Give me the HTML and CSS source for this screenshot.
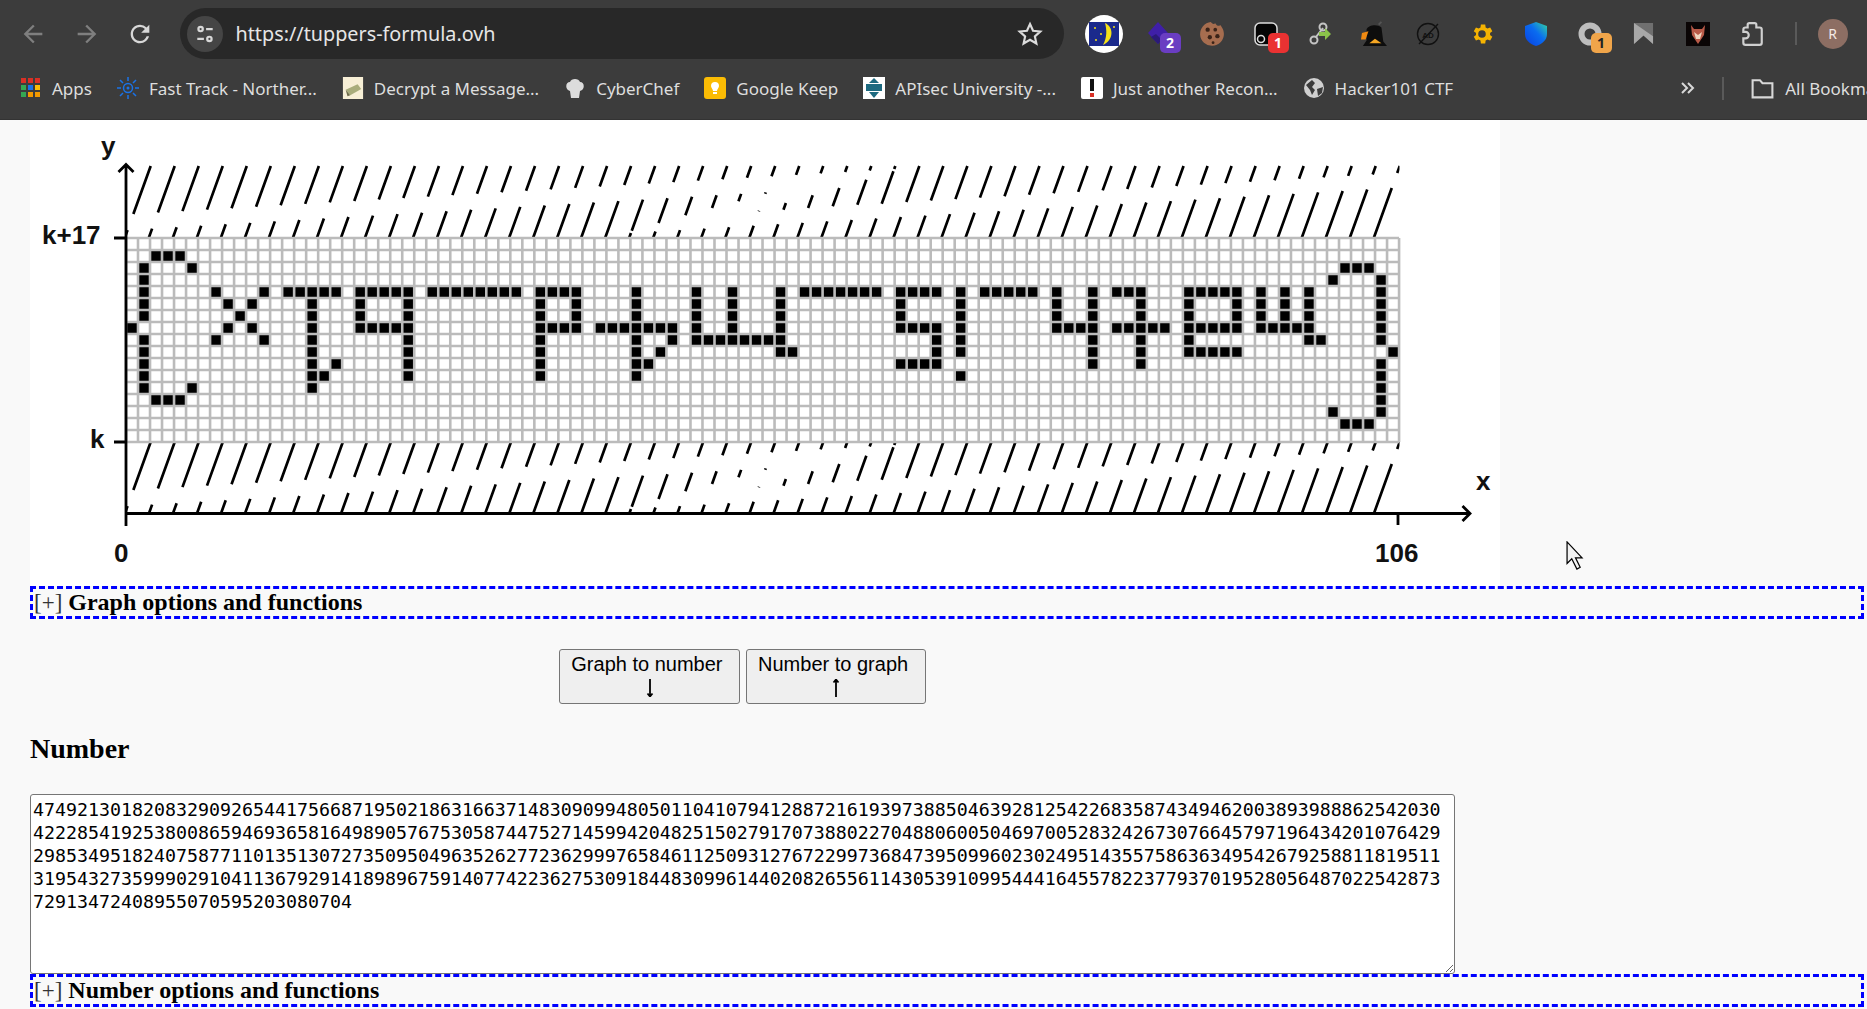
FILE: index.html
```html
<!DOCTYPE html>
<html lang="en">
<head>
<meta charset="utf-8">
<title>Tupper's formula</title>
<link rel="stylesheet" href="styles.css">
</head>
<body>
<header class="chrome">
  <div class="toolbar">
    <div class="nav dim"><svg viewBox="0 0 24 24"><path d="M20 11H7.830l5.590-5.590L12 4l-8 8 8 8 1.410-1.410L7.830 13H20v-2z"/></svg></div>
    <div class="nav dim"><svg viewBox="0 0 24 24"><path d="M4 11h12.170l-5.590-5.590L12 4l8 8-8 8-1.410-1.410L16.170 13H4v-2z"/></svg></div>
    <div class="nav"><svg viewBox="0 0 24 24"><path d="M17.650 6.350A7.958 7.958 0 0 0 12 4c-4.420 0-7.990 3.580-7.990 8s3.570 8 7.990 8c3.730 0 6.840-2.550 7.730-6h-2.080A5.990 5.990 0 0 1 12 18c-3.310 0-6-2.690-6-6s2.690-6 6-6c1.660 0 3.140.690 4.220 1.780L13 11h7V4l-2.350 2.350z"/></svg></div>
    <div class="omnibox">
      <div class="site-chip"><svg viewBox="0 0 20 20" class="line-icon"><circle cx="6" cy="5.500" r="2"/><path d="M11 5.500h6M3 14.500h6"/><circle cx="14" cy="14.500" r="2"/></svg></div>
      <span class="url">https://tuppers-formula.ovh</span>
      <svg class="star" viewBox="0 0 24 24"><path d="M12 2.800l2.800 6.200 6.700.7-5 4.500 1.400 6.600-5.900-3.400-5.900 3.400 1.400-6.600-5-4.500 6.700-.7z"/></svg>
    </div>
    <div class="extensions">
      <div class="ext"><svg class="e38" viewBox="0 0 38 38"><circle cx="19" cy="19" r="19" fill="#fff"/><rect x="4" y="7" width="30" height="24" fill="#1b2a8c"/><path d="M20 8c9 4 9 17-2 22 4-7 4-15 2-22z" fill="#f5e11a"/><circle cx="10" cy="13" r="1" fill="#f5e11a"/><circle cx="16" cy="19" r="1" fill="#f5e11a"/><circle cx="11" cy="25" r="1" fill="#f5e11a"/><circle cx="29" cy="12" r="1" fill="#f5e11a"/></svg></div>
      <div class="ext"><svg class="e24" viewBox="0 0 24 24"><path d="M12 0l10 11-10 11L2 11z" fill="#3f1fa8"/><path d="M5 15l7 7 4-4-6-6z" fill="#2b1a78"/></svg><span class="badge purple">2</span></div>
      <div class="ext"><svg class="e26" viewBox="0 0 24 24"><path d="M11 1c1 2 3 2 4 1 1 2 3 3 5 2 1 2 3 4 3 8a11 11 0 1 1-12-11z" fill="#a66d4f"/><circle cx="8" cy="8" r="2" fill="#3a2318"/><circle cx="15" cy="8" r="1.700" fill="#3a2318"/><circle cx="17" cy="14" r="2" fill="#3a2318"/><circle cx="10" cy="15" r="2" fill="#3a2318"/><circle cx="13" cy="20" r="1.300" fill="#3a2318"/></svg></div>
      <div class="ext"><svg class="e24" viewBox="0 0 24 24"><rect x="1" y="1" width="22" height="22" rx="5" fill="#050505" stroke="#ddd" stroke-width="1.500"/><circle cx="7" cy="17" r="3.500" fill="none" stroke="#ddd" stroke-width="1.500"/></svg><span class="badge red">1</span></div>
      <div class="ext"><svg class="e24" viewBox="0 0 24 24"><path d="M8 15l7-9" stroke="#c4c4c4" stroke-width="2" fill="none"/><circle cx="6" cy="18" r="3.500" fill="none" stroke="#c4c4c4" stroke-width="2"/><circle cx="15" cy="5" r="3.500" fill="none" stroke="#c4c4c4" stroke-width="2"/><path d="M11 10h6V6l6 6-6 6v-4h-6z" fill="#8bc34a"/></svg></div>
      <div class="ext"><svg class="e28" viewBox="0 0 28 28"><path d="M6 9c2-5 12-6 16-2l2 15 4 5H2l4-6z" fill="#0d0d0d"/><path d="M1 13l7-2-3 9H0z" fill="#f08a12"/><path d="M9 24l6-5 7 5z" fill="#f5a623"/><path d="M19 4l3-3" stroke="#555" stroke-width="2"/></svg></div>
      <div class="ext"><svg class="e24" viewBox="0 0 24 24"><circle cx="12" cy="12" r="10.500" fill="none" stroke="#111" stroke-width="1.400"/><path d="M3 22L22 2" stroke="#111" stroke-width="1.400"/><text x="12" y="16" text-anchor="middle" class="ad-text">AD</text></svg></div>
      <div class="ext"><svg class="e28" viewBox="0 0 24 24"><path d="M19.430 12.980c.04-.32.07-.64.07-.98s-.03-.66-.07-.98l2.110-1.650-2-3.460-2.490 1c-.52-.4-1.080-.73-1.690-.98l-.38-2.650h-4l-.38 2.650c-.61.25-1.170.59-1.690.98l-2.490-1-2 3.460 2.110 1.650c-.04.32-.07.65-.07.98s.03.66.07.98l-2.110 1.650 2 3.460 2.490-1c.52.4 1.080.73 1.690.98l.38 2.650h4l.38-2.650c.61-.25 1.170-.59 1.690-.98l2.490 1 2-3.460zM12 15.500a3.500 3.500 0 1 1 0-7 3.500 3.500 0 0 1 0 7z" fill="#f5b301"/></svg></div>
      <div class="ext"><svg class="e24" viewBox="0 0 24 24"><defs><linearGradient id="shield" x1="0" x2="1" y1="1" y2="0"><stop offset="0" stop-color="#0a3fe0"/><stop offset=".55" stop-color="#0a6cf0"/><stop offset="1" stop-color="#33d69f"/></linearGradient></defs><path d="M12 0l11 4v8c0 6-5 10-11 12C6 22 1 18 1 12V4z" fill="url(#shield)"/></svg></div>
      <div class="ext"><svg class="e24" viewBox="0 0 24 24"><circle cx="12" cy="12" r="8.500" fill="none" stroke="#bdbdbd" stroke-width="6"/></svg><span class="badge orange">1</span></div>
      <div class="ext"><svg class="e22" viewBox="0 0 22 22"><path d="M1 0h20v22l-10-9-10 9z" fill="#6f6f6f"/><path d="M1 0l20 14v8l-10-9-10 9z" fill="#a8a8a8"/></svg></div>
      <div class="ext"><svg class="e24" viewBox="0 0 24 24"><rect width="24" height="24" fill="#0a0505"/><path d="M5 3l3 4h8l3-4-1 10-6 9-6-9z" fill="#b95a48"/><path d="M8 10l4 3 4-3-2 7h-4z" fill="#f0d6c0"/></svg></div>
      <div class="ext"><svg class="e26" viewBox="0 0 24 24"><path d="M8 6V3.500A1.500 1.500 0 0 1 9.500 2h5A1.500 1.500 0 0 1 16 3.500V6h3a2 2 0 0 1 2 2v12a2 2 0 0 1-2 2H6a2 2 0 0 1-2-2v-4h2a3 3 0 0 0 0-6H4V8a2 2 0 0 1 2-2z" fill="none" stroke="#d0d0d0" stroke-width="2"/></svg></div>
    </div>
    <div class="divider tall"></div>
    <div class="avatar">R</div>
  </div>
  <nav class="bookmarks">
    <a class="bm"><svg class="ic" viewBox="0 0 22 22"><rect x="1" y="1" width="5" height="5" fill="#d93025"/><rect x="8" y="1" width="5" height="5" fill="#d93025"/><rect x="15" y="1" width="5" height="5" fill="#d93025"/><rect x="1" y="8" width="5" height="5" fill="#34a853"/><rect x="8" y="8" width="5" height="5" fill="#1a73e8"/><rect x="15" y="8" width="5" height="5" fill="#fbbc04"/><rect x="1" y="15" width="5" height="5" fill="#34a853"/><rect x="8" y="15" width="5" height="5" fill="#f29900"/><rect x="15" y="15" width="5" height="5" fill="#f29900"/></svg>Apps</a>
    <a class="bm"><svg class="ic" viewBox="0 0 22 22"><circle cx="11" cy="11" r="4.500" fill="none" stroke="#1a73e8" stroke-width="1.500"/><circle cx="11" cy="11" r="1.500" fill="#1a73e8"/><path d="M11 0v4M11 18v4M0 11h4M18 11h4M3 3l3 3M16 16l3 3M3 19l3-3M16 6l3-3" stroke="#1a73e8" stroke-width="1.500"/></svg>Fast Track - Norther...</a>
    <a class="bm"><svg class="ic" viewBox="0 0 22 24"><rect width="22" height="24" fill="#f7efd6"/><path d="M3 14l13-6 4 5-12 7z" fill="#a9ad7c"/><path d="M3 14l5 6-3 1z" fill="#6d6a4a"/></svg>Decrypt a Message...</a>
    <a class="bm"><svg class="ic" viewBox="0 0 22 22"><path d="M6 14C1 13 1 5 6 5c1-4 9-4 10 0 5 0 5 8 0 9l-1 7H7z" fill="#dcdcdc"/></svg>CyberChef</a>
    <a class="bm"><svg class="ic" viewBox="0 0 22 22"><rect width="22" height="22" rx="3" fill="#fbbc04"/><path d="M7 9a4 4 0 0 1 8 0c0 2-2 3-2 5H9c0-2-2-3-2-5z" fill="#fff"/><rect x="9" y="15" width="4" height="2" fill="#fff"/></svg>Google Keep</a>
    <a class="bm"><svg class="ic" viewBox="0 0 22 22"><rect width="22" height="22" fill="#fff"/><path d="M11 1l5 5H6z" fill="#1d6a80"/><rect x="3" y="7" width="16" height="7" fill="#1d6a80"/><path d="M6 15h10l-5 6z" fill="#1d6a80"/></svg>APIsec University -...</a>
    <a class="bm"><svg class="ic" viewBox="0 0 22 22"><rect width="22" height="22" rx="2" fill="#fff"/><rect x="9" y="2" width="4" height="12" fill="#111"/><rect x="9" y="16" width="4" height="4" fill="#d93025"/></svg>Just another Recon...</a>
    <a class="bm"><svg class="ic" viewBox="0 0 22 22"><circle cx="11" cy="11" r="10" fill="#d0d0d0"/><path d="M3 8l6-5 3 3-3 4 3 3-3 5-2-5zM14 12l6-2-1 6-4 3z" fill="#3c3c3c"/></svg>Hacker101 CTF</a>
    <div class="bm-end">
      <svg class="more line-icon" viewBox="0 0 16 16"><path d="M3 3l5 5-5 5M9 3l5 5-5 5"/></svg>
      <div class="divider"></div>
      <a class="bm"><svg class="ic folder line-icon" viewBox="0 0 24 24"><path d="M2.500 20.500V4h7l2.500 3h9.500v13.500z"/></svg>All Bookmarks</a>
    </div>
  </nav>
</header>

<main class="page">
  <div class="graph">
    <svg class="plot" viewBox="30 120 1470 466">
      <defs><clipPath id="plot-clip"><rect x="127" y="160" width="1272.500" height="360"/></clipPath></defs>
      <path id="hatch" class="hatch" clip-path="url(#plot-clip)"/>
      <path id="pixels" class="pixels"/>
      <path id="grid" class="grid"/>
      <path class="axis" d="M126 166V526M118.500 172l7.500-7.500 7.500 7.500M126 513.500H1470M1462.500 506l7.500 7.500-7.500 7.500M1398 513.500V525M114 238h12M114 442h12"/>
      <text class="axis-label" x="101" y="155">y</text>
      <text class="axis-label" x="42" y="244">k+17</text>
      <text class="axis-label" x="90" y="448">k</text>
      <text class="axis-label" x="114" y="562">0</text>
      <text class="axis-label" x="1375" y="562">106</text>
      <text class="axis-label" x="1476" y="490">x</text>
    </svg>
  </div>
  <div class="bar"><span class="toggle">[+]</span> Graph options and functions</div>
  <div class="convert">
    <button class="btn">Graph to number&nbsp;<br><svg class="arrow" viewBox="0 0 8 18"><path d="M4 0v17M1.500 14.500L4 17.500l2.500-3"/></svg></button>
    <button class="btn">Number to graph&nbsp;<br><svg class="arrow" viewBox="0 0 8 18"><path d="M4 18V1M1.500 3.500L4 .5l2.500 3"/></svg></button>
  </div>
  <h2 class="title">Number</h2>
  <textarea class="number" spellcheck="false">4749213018208329092654417566871950218631663714830909948050110410794128872161939738850463928125422683587434946200389398886254203042228541925380086594693658164989057675305874475271459942048251502791707388022704880600504697005283242673076645797196434201076429298534951824075877110135130727350950496352627723629997658461125093127672299736847395099602302495143557586363495426792588118195113195432735999029104113679291418989675914077422362753091844830996144020826556114305391099544416455782237793701952805648702254287372913472408955070595203080704</textarea>
  <div class="bar"><span class="toggle">[+]</span> Number options and functions</div>
</main>

<svg class="cursor" viewBox="0 0 20 32"><path d="M1 1v23l5-5 5.500 11 3.500-2-5-10h7z"/></svg>
<script src="script.js"></script>
</body>
</html>
```

FILE: styles.css
```css
* { box-sizing: border-box; }
html, body { margin: 0; height: 1009px; overflow: hidden; }
body { background: #f9f9f9; color: #000; font-family: "Liberation Serif", serif; position: relative; }

.chrome { height: 120px; background: #3c3c3c; border-bottom: 1px solid #333; overflow: hidden; font-family: "Noto Sans", sans-serif; color: #e3e3e3; }

.toolbar { height: 66px; padding: 8px 0 7px 6px; display: flex; align-items: center; }
.nav { width: 54px; height: 40px; display: flex; align-items: center; justify-content: center; flex: none; margin-right: -.5px; }
.nav svg { width: 28px; height: 28px; fill: #d8d8d8; }
.nav.dim svg { fill: #7f7f7f; }

.omnibox { width: 884px; height: 51px; margin-left: 13px; flex: none; background: #282828; border-radius: 26px; display: flex; align-items: center; padding: 0 21px 0 7px; }
.site-chip { width: 36px; height: 36px; border-radius: 50%; background: #454545; display: flex; align-items: center; justify-content: center; flex: none; }
.site-chip svg { width: 22px; height: 22px; }
.line-icon { fill: none; stroke: #d8d8d8; stroke-width: 2; }
.url { flex: 1; margin-left: 13px; font-size: 19.800px; color: #e6e6e6; white-space: nowrap; }
.star { width: 26px; height: 26px; fill: none; stroke: #dcdcdc; stroke-width: 2; flex: none; }

.extensions { display: flex; margin-left: 13px; flex: none; }
.ext { width: 54px; height: 51px; display: flex; align-items: center; justify-content: center; position: relative; }
.e38 { width: 38px; height: 38px; }
.e28 { width: 28px; height: 26px; }
.e26 { width: 26px; height: 26px; }
.e24 { width: 24px; height: 24px; }
.e22 { width: 21px; height: 21px; }
.ad-text { font: bold 8px "Liberation Sans", sans-serif; fill: #111; }
.badge { position: absolute; left: 29px; top: 25px; width: 21px; height: 20px; border-radius: 5px; font: bold 14px/20px "Noto Sans", sans-serif; text-align: center; color: #fff; }
.badge.purple { background: #6a3dc2; }
.badge.red { background: #ea3232; }
.badge.orange { background: #f0a54a; color: #222; left: 28px; }

.divider { width: 2px; height: 23px; background: #5a5a5a; flex: none; }
.divider.tall { margin-left: 16px; }
.avatar { width: 30px; height: 30px; margin-left: 21px; flex: none; border-radius: 50%; background: #8d6e63; color: #f3e9e5; font: 14px/30px "Noto Sans", sans-serif; text-align: center; }

.bookmarks { height: 44px; padding-left: 20px; display: flex; align-items: center; gap: 25px; white-space: nowrap; }
.bm { display: flex; align-items: center; gap: 10px; font-size: 17px; color: #dedede; flex: none; }
.ic { width: 22px; height: 22px; flex: none; }
.ic.folder { width: 25px; height: 25px; }
.bm-end { display: flex; align-items: center; flex: none; margin-left: 201px; }
.more { width: 16px; height: 16px; }
.bm-end .divider { margin: 0 26px 0 27px; }

.page { padding: 0 3px 0 30px; }
.graph { width: 1470px; height: 466px; background: #fff; }
.plot { display: block; width: 1470px; height: 466px; }
.hatch { fill: none; stroke: #000; stroke-width: 2.700; }
.pixels { fill: #000; }
.grid { fill: none; stroke: #bbb; stroke-width: 2.600; }
.axis { fill: none; stroke: #000; stroke-width: 2.800; }
.axis-label { font: bold 26px "Liberation Sans", sans-serif; fill: #111; }

.bar { height: 33px; border: 3px dashed #00f; padding: 0 1px; font-size: 24px; font-weight: bold; line-height: 27px; white-space: nowrap; }
.toggle { font-weight: normal; font-size: 23px; color: #333; }

.convert { width: 1425px; margin-top: 30px; display: flex; justify-content: center; gap: 6px; }
.btn { padding: 2.500px 11px 4.500px; background: #efefef; border: 1px solid #767676; border-radius: 3px; font: 20px/23px "Liberation Sans", sans-serif; color: #000; }
.arrow { display: inline-block; width: 8px; height: 18px; vertical-align: -3px; fill: none; stroke: #000; stroke-width: 1.800; }

.title { margin: 29px 0; font-size: 28px; line-height: 32px; font-weight: bold; }

.number { display: block; width: 1425px; height: 180px; margin-bottom: 0; padding: 3px 12px 2px 2px; background: #fff; border: 1px solid #767676; border-radius: 3px; font: 18.280px/23px "DejaVu Sans Mono", monospace; color: #000; outline: none; }

.cursor { position: absolute; left: 1565.500px; top: 541px; width: 19px; height: 30px; fill: #f2f2f2; stroke: #000; stroke-width: 1.300; }
```

FILE: script.js
```js
// Builds the Tupper plot: a 106 x 17 grid of cells plus the hatched bands around it.
var X0 = 126, Y0 = 238, CELL = 12.01, ROW = 12;

var rows = {
  1: "2-4",
  2: "1 5 101-103",
  3: "1 100 104",
  4: "1 7 11 13-17 19-23 25-32 34-37 42 47 50 54 56-62 64-67 69 71-75 77 80 82-84 88-92 94 96 98 104",
  5: "1 8 10 15 19 23 34 37 42 47 50 54 64 69 77 80 84 88 92 94 96 98 104",
  6: "1 9 15 19 23 34 37 42 47 50 54 64 69 77 80 84 88 92 94 96 98 104",
  7: "0 8 10 15 19-23 34-37 39-45 47 50 54 64-67 69 77-80 82-86 88-92 94-98 104",
  8: "1 7 11 15 23 34 42 45 47-54 67 69 80 84 88 98 99 104",
  9: "1 15 23 34 42 44 54 55 67 69 80 84 88-92 105",
  10: "1 15 17 23 34 42 43 64-67 80 84 104",
  11: "1 15 16 23 34 42 69 104",
  12: "1 5 15 104",
  13: "2-4 104",
  14: "100 104",
  15: "101-103"
};

var pixels = "";
Object.keys(rows).forEach(function (r) {
  rows[r].split(" ").forEach(function (run) {
    var parts = run.split("-");
    var a = +parts[0], b = +(parts[1] || parts[0]);
    var x = X0 + a * CELL, w = (b - a + 1) * CELL, y = Y0 + r * ROW;
    pixels += "M" + x + " " + y + "h" + w + "v" + ROW + "h" + (-w) + "z";
  });
});
document.getElementById("pixels").setAttribute("d", pixels);

var grid = "";
for (var c = 0; c <= 106; c++) grid += "M" + (X0 + c * CELL) + " " + Y0 + "V" + (Y0 + 17 * ROW);
for (var r = 0; r <= 17; r++) grid += "M" + X0 + " " + (Y0 + r * ROW) + "H" + (X0 + 106 * CELL);
document.getElementById("grid").setAttribute("d", grid);

// Each slanted line has up to three visible pieces, given as offsets below the band's top.
var STEP = 1.45, SLOPE = 0.361, TOP_A = 166, TOP_B = 442;
var midEnds = { 21: 64.7, 22: 57, 23: 49.3, 24: 42, 25: 35.3, 26: 27.7 };
var islands = { 26: [44.7, 45.4], 27: [37, 43.7], 28: [29.3, 42], 29: [22, 40.3], 30: [13.7, 38.7], 31: [5.3, 37.7] };

function segment(i, top, from, to) {
  var xTop = 150.7 + 24.02 * i;
  return "M" + (xTop - SLOPE * from).toFixed(2) + " " + (top + from).toFixed(2) +
         "L" + (xTop - SLOPE * to).toFixed(2) + " " + (top + to).toFixed(2);
}

var hatch = "";
[TOP_A, TOP_B].forEach(function (top) {
  for (var i = 0; i <= 52; i++) {
    var firstEnd = i <= 31 ? 48 - STEP * i : 36 - STEP * (i - 32);
    hatch += segment(i, top, 0, firstEnd);
    if (i <= 26) hatch += segment(i, top, 64.1 - STEP * i, midEnds[i] || 72);
    if (islands[i]) hatch += segment(i, top, islands[i][0], islands[i][1]);
    if (i >= 21) hatch += segment(i, top, 67 - STEP * (i - 21), 72);
  }
});
document.getElementById("hatch").setAttribute("d", hatch);
```
